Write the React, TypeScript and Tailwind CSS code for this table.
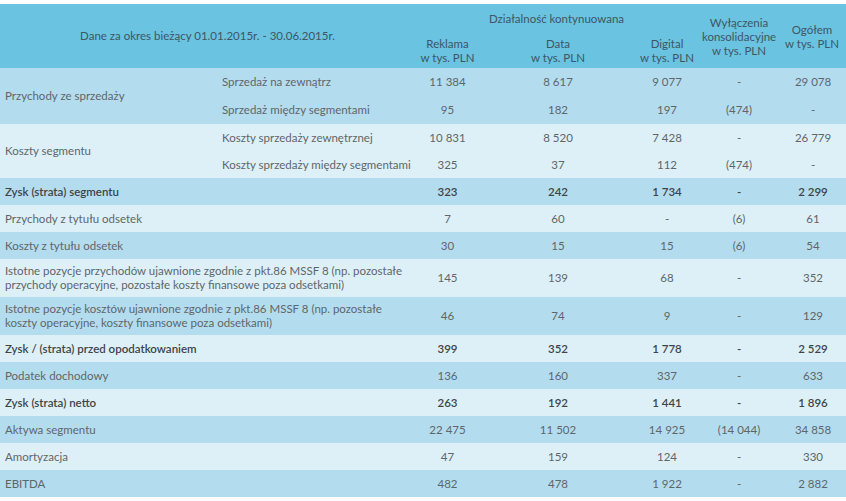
import React from 'react';

type Row = {
  label: string;
  values: string[];
  bold?: boolean;
  tall?: boolean;
};

type Group = {
  label: string;
  subs: { label: string; values: string[] }[];
  h: string;
};

const groups: Group[] = [
  {
    label: 'Przychody ze sprzedaży',
    h: 'h-[28px]',
    subs: [
      { label: 'Sprzedaż na zewnątrz', values: ['11 384', '8 617', '9 077', '-', '29 078'] },
      { label: 'Sprzedaż między segmentami', values: ['95', '182', '197', '(474)', '-'] },
    ],
  },
  {
    label: 'Koszty segmentu',
    h: 'h-[27px]',
    subs: [
      { label: 'Koszty sprzedaży zewnętrznej', values: ['10 831', '8 520', '7 428', '-', '26 779'] },
      { label: 'Koszty sprzedaży między segmentami', values: ['325', '37', '112', '(474)', '-'] },
    ],
  },
];

const rows: Row[] = [
  { label: 'Zysk (strata) segmentu', values: ['323', '242', '1 734', '-', '2 299'], bold: true },
  { label: 'Przychody z tytułu odsetek', values: ['7', '60', '-', '(6)', '61'] },
  { label: 'Koszty z tytułu odsetek', values: ['30', '15', '15', '(6)', '54'] },
  {
    label:
      'Istotne pozycje przychodów ujawnione zgodnie z pkt.86 MSSF 8 (np. pozostałe przychody operacyjne, pozostałe koszty finansowe poza odsetkami)',
    values: ['145', '139', '68', '-', '352'],
    tall: true,
  },
  {
    label:
      'Istotne pozycje kosztów ujawnione zgodnie z pkt.86 MSSF 8 (np. pozostałe koszty operacyjne, koszty finansowe poza odsetkami)',
    values: ['46', '74', '9', '-', '129'],
    tall: true,
  },
  { label: 'Zysk / (strata) przed opodatkowaniem', values: ['399', '352', '1 778', '-', '2 529'], bold: true },
  { label: 'Podatek dochodowy', values: ['136', '160', '337', '-', '633'] },
  { label: 'Zysk (strata) netto', values: ['263', '192', '1 441', '-', '1 896'], bold: true },
  { label: 'Aktywa segmentu', values: ['22 475', '11 502', '14 925', '(14 044)', '34 858'] },
  { label: 'Amortyzacja', values: ['47', '159', '124', '-', '330'] },
  { label: 'EBITDA', values: ['482', '478', '1 922', '-', '2 882'] },
];

const dark = 'bg-[#b4dcef]';
const light = 'bg-[#ddf0f8]';

export default function App() {
  return (
    <div className="w-[846px] h-[501px] bg-white pt-[4px] font-['Lato',sans-serif] text-[11.5px] text-[#5f6669]">
      <table className="w-full table-fixed border-collapse">
        <colgroup>
          <col className="w-[215px]" />
          <col className="w-[200px]" />
          <col className="w-[65px]" />
          <col className="w-[156px]" />
          <col className="w-[62px]" />
          <col className="w-[82px]" />
          <col className="w-[66px]" />
        </colgroup>
        <thead className="bg-[#69c3e1] text-[#3f5663] leading-[14px]">
          <tr className="h-[32px]">
            <th rowSpan={2} colSpan={2} className="font-normal text-center">
              Dane za okres bieżący 01.01.2015r. - 30.06.2015r.
            </th>
            <th colSpan={3} className="font-normal text-center align-top pt-[8px]">
              Działalność kontynuowana
            </th>
            <th rowSpan={2} className="font-normal text-center pt-[2px]">
              Wyłączenia
              <br />
              konsolidacyjne
              <br />
              w tys. PLN
            </th>
            <th rowSpan={2} className="font-normal text-center pt-[2px] pr-[2px]">
              Ogółem
              <br />
              w tys. PLN
            </th>
          </tr>
          <tr className="h-[32px]">
            <th className="font-normal text-center align-top pt-[1px]">
              Reklama
              <br />
              w tys. PLN
            </th>
            <th className="font-normal text-center align-top pt-[1px]">
              Data
              <br />
              w tys. PLN
            </th>
            <th className="font-normal text-center align-top pt-[1px]">
              Digital
              <br />
              w tys. PLN
            </th>
          </tr>
        </thead>
        <tbody>
          {groups.map((g, gi) => {
            const bg = gi % 2 === 0 ? dark : light;
            return g.subs.map((s, si) => (
              <tr key={g.label + si} className={`${bg} ${g.h}`}>
                {si === 0 && (
                  <td rowSpan={2} className="pl-[5px] align-middle">
                    {g.label}
                  </td>
                )}
                <td className="pl-[7px]">{s.label}</td>
                {s.values.map((v, vi) => (
                  <td key={vi} className="text-center">
                    {v}
                  </td>
                ))}
              </tr>
            ));
          })}
          {rows.map((r, ri) => (
            <tr
              key={r.label}
              className={`${ri % 2 === 0 ? dark : light} ${r.tall ? 'h-[38px]' : 'h-[27px]'} ${
                r.bold ? 'font-semibold text-[#3f4446]' : ''
              }`}
            >
              <td colSpan={2} className="pl-[5px] pr-[2px] leading-[14px]">
                {r.label}
              </td>
              {r.values.map((v, vi) => (
                <td key={vi} className="text-center">
                  {v}
                </td>
              ))}
            </tr>
          ))}
        </tbody>
      </table>
    </div>
  );
}
